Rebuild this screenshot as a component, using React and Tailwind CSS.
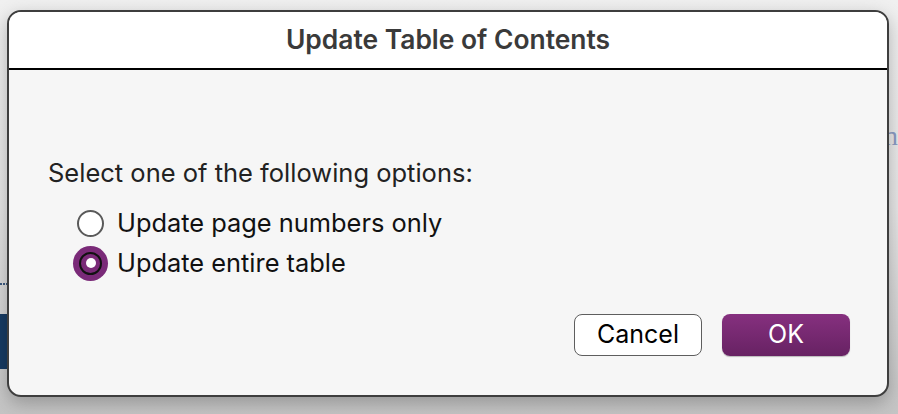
import React from 'react';

const font = { fontFamily: 'Inter, "Noto Sans", sans-serif' };

function Radio({ checked }) {
  if (checked) {
    return (
      <div className="w-[35px] h-[35px] rounded-full bg-[#7a2a78] flex items-center justify-center shrink-0 -ml-[4px] mr-[-4px]">
        <div className="w-[23px] h-[23px] rounded-full border-2 border-[#111] bg-[#7a2a78] flex items-center justify-center">
          <div className="w-[10px] h-[10px] rounded-full bg-white" />
        </div>
      </div>
    );
  }
  return <div className="w-[27px] h-[27px] rounded-full border-2 border-[#5a5a5a] bg-white shrink-0" />;
}

export default function App() {
  return (
    <div className="relative w-[898px] h-[414px] overflow-hidden bg-gradient-to-b from-[#f0f0f0] via-[#e6e6e6] to-[#c4c4c4]" style={font}>
      {/* document glimpses behind the sheet */}
      <div className="absolute left-0 top-[314px] w-[10px] h-[55px] bg-[#173b63]" />
      <div className="absolute left-0 top-[283px] w-[8px] border-t-2 border-dotted border-[#3c5a80]" />
      <div className="absolute left-[884px] top-[122px] text-[28px] leading-none text-[#8a9cc4]" style={{ fontFamily: '"Liberation Serif", serif' }}>n</div>

      <div className="relative pt-[10px] pl-[7px]">
        <div className="w-[882px] h-[387px] rounded-[14px] border-2 border-[#3e3e3e] overflow-hidden bg-[#f6f6f6] shadow-[0_6px_18px_rgba(0,0,0,0.25)] flex flex-col">
          <div className="h-[58px] bg-white border-b-2 border-black flex items-center justify-center">
            <h1 className="text-[26.4px] font-semibold text-[#3a3a3a]">Update Table of Contents</h1>
          </div>

          <div className="flex-1 flex flex-col pl-[39px] pr-[37px] pt-[89px]">
            <p className="text-[25.5px] leading-[28px] text-[#222]">Select one of the following options:</p>

            <div className="mt-[16px] flex flex-col">
              <label className="h-[40px] flex items-center gap-[13px] pl-[29px]">
                <Radio />
                <span className="text-[25.4px] text-[#111]">Update page numbers only</span>
              </label>
              <label className="h-[40px] flex items-center gap-[13px] pl-[29px]">
                <Radio checked />
                <span className="text-[25.4px] text-[#111]">Update entire table</span>
              </label>
            </div>

            <div className="mt-[31px] flex justify-end gap-[20px]">
              <button className="w-[128px] h-[42px] rounded-[8px] border-[1.5px] border-[#5e5e5e] bg-white text-[25px] text-black">Cancel</button>
              <button className="w-[128px] h-[42px] rounded-[8px] bg-gradient-to-b from-[#86307f] to-[#672263] text-[25px] text-white shadow-[0_1px_1px_rgba(0,0,0,0.25)]">OK</button>
            </div>
          </div>
        </div>
      </div>
    </div>
  );
}
